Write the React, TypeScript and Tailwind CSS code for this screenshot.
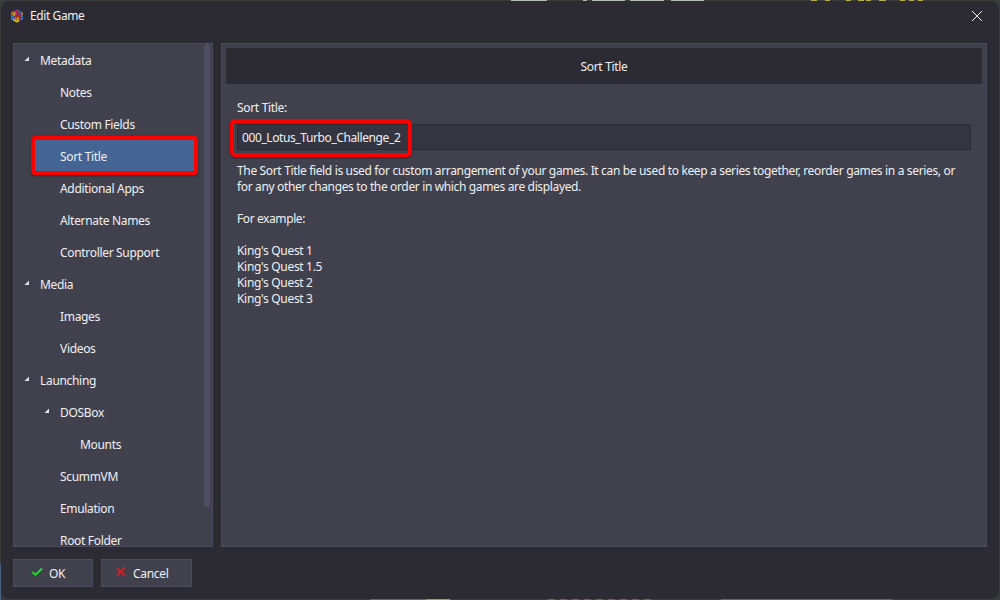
import React from "react";

type TreeItem = { label: string; level: 0 | 1 | 2; expanded?: boolean; selected?: boolean };

const items: TreeItem[] = [
  { label: "Metadata", level: 0, expanded: true },
  { label: "Notes", level: 1 },
  { label: "Custom Fields", level: 1 },
  { label: "Sort Title", level: 1, selected: true },
  { label: "Additional Apps", level: 1 },
  { label: "Alternate Names", level: 1 },
  { label: "Controller Support", level: 1 },
  { label: "Media", level: 0, expanded: true },
  { label: "Images", level: 1 },
  { label: "Videos", level: 1 },
  { label: "Launching", level: 0, expanded: true },
  { label: "DOSBox", level: 1, expanded: true },
  { label: "Mounts", level: 2 },
  { label: "ScummVM", level: 1 },
  { label: "Emulation", level: 1 },
  { label: "Root Folder", level: 1 },
];

const indent = { 0: "pl-[9px]", 1: "pl-[29px]", 2: "pl-[49px]" };

const cubeFaces = [
  { x: 7, y: 0.2, ux: 2, uy: 1.05, vx: -2, vy: 1.05, colors: ["#c8359a", "#2b8ff0", "#2b8ff0", "#a437d8", "#ef3420", "#ef3420", "#f59a1c", "#f4dc20", "#c234b0"] },
  { x: 1, y: 3.35, ux: 2, uy: 1.05, vx: 0, vy: 2.4, colors: ["#f4901c", "#f8da1c", "#ed3622", "#1ba7f0", "#a83be0", "#f48f1c", "#1ba7f0", "#f8e024", "#f8e024"] },
  { x: 7, y: 6.5, ux: 2, uy: -1.05, vx: 0, vy: 2.4, colors: ["#ed2d22", "#a335d4", "#f49a1c", "#f6dc20", "#ed3622", "#2499ee", "#f8e024", "#a335d4", "#2499ee"] },
];

function CubeLogo() {
  return (
    <svg width="14" height="14" viewBox="0 0 14 14" className="shrink-0">
      {cubeFaces.flatMap((face, f) =>
        face.colors.map((color, i) => {
          const x = face.x + (i % 3) * face.ux + Math.floor(i / 3) * face.vx;
          const y = face.y + (i % 3) * face.uy + Math.floor(i / 3) * face.vy;
          return <path key={`${f}-${i}`} d={`M${x} ${y}l${face.ux} ${face.uy}l${face.vx} ${face.vy}l${-face.ux} ${-face.uy}Z`} fill={color} stroke="#241a24" strokeWidth=".25" />;
        }),
      )}
    </svg>
  );
}

function TreeRow({ item }: { item: TreeItem }) {
  return (
    <div className={`relative flex h-8 shrink-0 items-center ${indent[item.level]}`}>
      {item.selected && (
        <div className="absolute -top-[5px] left-[17px] h-[39px] w-[167px] rounded-[4px] border-[4px] border-[#fe0000] bg-[#446494] shadow-[0_1px_2px_#25252f]" />
      )}
      <div className="flex w-[17px] shrink-0">
        {item.expanded && (
          <svg width="6" height="6" viewBox="0 0 6 6" className="ml-px -mt-[4px]">
            <path d="M5 .5V5H.5Z" fill="#e4e4e8" />
          </svg>
        )}
      </div>
      <span className="relative">{item.label}</span>
    </div>
  );
}

function Sidebar() {
  return (
    <nav className="flex h-[504px] w-[200px] shrink-0 overflow-hidden border border-[#4c4c5e] bg-[#40414d]">
      <div className="flex w-[190px] shrink-0 flex-col pt-px">
        {items.map((item) => <TreeRow key={item.label} item={item} />)}
      </div>
      <div className="h-[463px] w-[6px] shrink-0 rounded-[3px] bg-[#4e4f62]" />
    </nav>
  );
}

function SortTitlePanel() {
  return (
    <main className="flex h-[504px] w-[766px] flex-col border border-[#4c4c5e] bg-[#40414d] p-[4px]">
      <header className="flex h-9 shrink-0 items-center justify-center bg-[#2c2b34] pt-[2px]">Sort Title</header>
      <div className="flex flex-col px-[11px] pt-[16px]">
        <label htmlFor="title" className="h-[24px] leading-4">Sort Title:</label>
        <div className="relative h-[26px]">
          <input id="title" defaultValue="000_Lotus_Turbo_Challenge_2" className="block h-[26px] w-[734px] border border-[#2b2b34] bg-[#343541] px-[4px] pt-px tracking-[-0.4px] outline-none" />
          <div className="pointer-events-none absolute -left-[7px] -top-[5px] h-[38px] w-[182px] rounded-[5px] border-[4px] border-[#fe0000] shadow-[0_1px_2px_#25252f]" />
        </div>
        <div className="mt-[13px] whitespace-nowrap leading-4">
          <p className="tracking-[-0.345px]">The Sort Title field is used for custom arrangement of your games. It can be used to keep a series together, reorder games in a series, or</p>
          <p className="tracking-[-0.355px]">for any other changes to the order in which games are displayed.</p>
          <p className="my-4 tracking-[-0.4px]">For example:</p>
          <p>King's Quest 1</p>
          <p>King's Quest 1.5</p>
          <p>King's Quest 2</p>
          <p>King's Quest 3</p>
        </div>
      </div>
    </main>
  );
}

export default function App() {
  return (
    <div className="relative h-[600px] w-[1000px] overflow-hidden bg-[#3b3d3b] p-px font-['Noto_Sans','Open_Sans',sans-serif] text-[12px] tracking-[-0.32px] text-[#f0f0f2]">
      <svg width="1000" height="600" className="absolute inset-0">
        <path d="M511 .5H547M583 .5H587M592 .5H625M630 .5H664M671 .5H704" stroke="#b6bab7" />
        <path d="M811 .5H817M825 .5H830M846 .5H851M858 .5H864M866 .5H871M879 .5H886M900 .5H905M909 .5H914M918 .5H923" stroke="#b7ae48" />
        <path d="M.5 564V600" stroke="#49607f" />
        <path d="M370 599.5H426M721 599.5H892" stroke="#5d6779" />
        <path d="M426 599.5H450" stroke="#9ca046" />
        <path d="M548 599.5H656" stroke="#9a5456" strokeDasharray="7 5" />
      </svg>
      <div className="relative h-[598px] w-[998px] rounded-[8px] bg-[#2c2b34] px-[12px]">
        <header className="flex h-[42px] items-start pt-[7px]">
          <div className="-ml-[3px] flex items-center gap-[6px]">
            <CubeLogo />
            <span className="leading-4 tracking-[-0.4px]">Edit Game</span>
          </div>
          <button aria-label="Close" className="ml-auto mr-[4px] mt-[2px]">
            <svg width="12" height="12" viewBox="0 0 12 12"><path d="m1 1 10 10M11 1 1 11" stroke="#eeeeef" strokeWidth="1" /></svg>
          </button>
        </header>
        <div className="flex gap-2">
          <Sidebar />
          <SortTitlePanel />
        </div>
        <footer className="mt-[12px] flex gap-2">
          <button className="flex h-[28px] w-[80px] items-center border border-[#4c4c5e] bg-[#40414d] pl-[17px]">
            <svg width="14" height="12" viewBox="0 0 14 12" className="-mt-[2px]">
              <path d="m2 7 3 3 6-6" fill="none" stroke="#245034" strokeWidth="2" />
              <path d="m1.5 6 3 2.8L11 2.5" fill="none" stroke="#28df38" strokeWidth="1.8" />
            </svg>
            <span className="ml-[4px] mt-px">OK</span>
          </button>
          <button className="flex h-[28px] w-[91px] items-center border border-[#4c4c5e] bg-[#40414d] pl-[13px]">
            <svg width="13" height="12" viewBox="0 0 13 12" className="-mt-[2px]">
              <path d="m3 3 7 7M10 3 3 10" stroke="#672a36" strokeWidth="2" />
              <path d="m2 2 3 3 5 4.5M10 1.5 5 6 2 9.5" fill="none" stroke="#e72027" strokeWidth="1.6" />
            </svg>
            <span className="ml-[5px] mt-px">Cancel</span>
          </button>
        </footer>
      </div>
    </div>
  );
}
